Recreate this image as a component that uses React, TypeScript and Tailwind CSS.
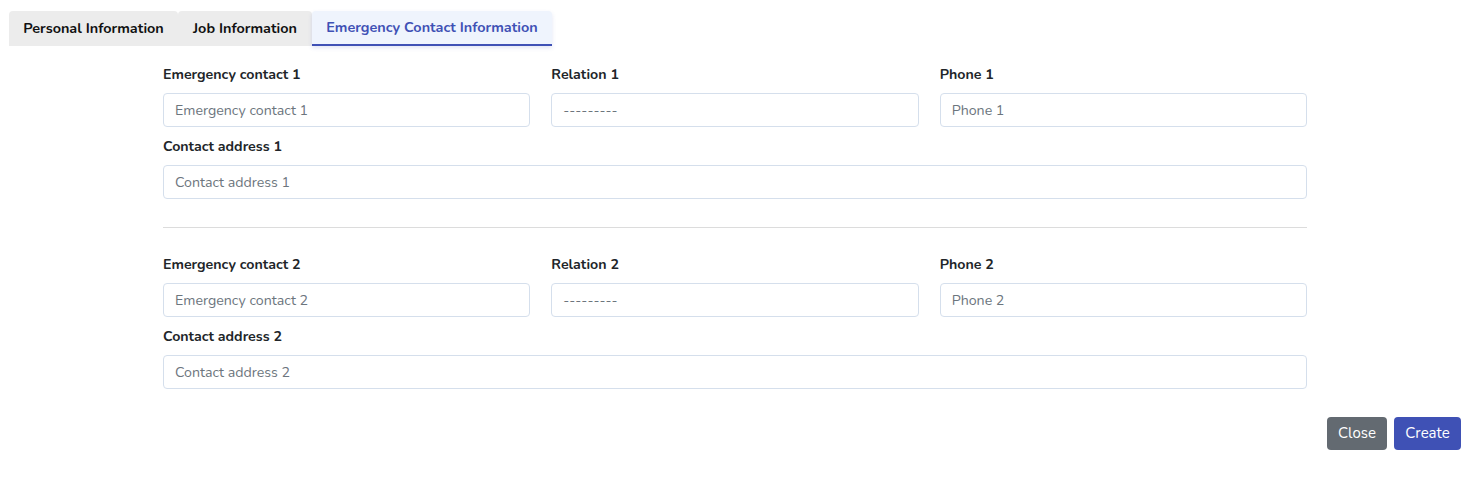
import React from "react";

const font = { fontFamily: "Nunito, Lato, 'Noto Sans', sans-serif" };

function Field({ label, placeholder }: { label: string; placeholder: string }) {
  return (
    <div className="flex flex-col">
      <label className="h-[21px] mb-2 text-[14.2px] leading-[21px] font-bold text-[#212529]">{label}</label>
      <input
        className="h-[34px] w-full rounded-[4px] border border-[#d5dfec] px-[11px] text-[14.2px] text-[#212529] placeholder:text-[#6c757d] outline-none"
        placeholder={placeholder}
      />
    </div>
  );
}

function Section({ n }: { n: number }) {
  return (
    <div className="flex flex-col gap-[9px]">
      <div className="grid grid-cols-3 gap-x-[21px]">
        <Field label={`Emergency contact ${n}`} placeholder={`Emergency contact ${n}`} />
        <Field label={`Relation ${n}`} placeholder="---------" />
        <Field label={`Phone ${n}`} placeholder={`Phone ${n}`} />
      </div>
      <Field label={`Contact address ${n}`} placeholder={`Contact address ${n}`} />
    </div>
  );
}

export default function App() {
  return (
    <div className="w-[1478px] h-[480px] bg-white pt-[11px] px-[9px]" style={font}>
      <div className="flex">
        <div className="h-[35px] w-[169px] flex items-center justify-center rounded-t-[4px] bg-[#ececec] text-[#111] text-[14.4px] font-bold">
          Personal Information
        </div>
        <div className="h-[35px] w-[134px] flex items-center justify-center rounded-t-[4px] bg-[#ececec] text-[#111] text-[14.4px] font-bold">
          Job Information
        </div>
        <div className="h-[35px] w-[240px] flex items-center justify-center rounded-t-[4px] bg-[#eff4fd] text-[#3f51b5] text-[14.4px] font-bold border-b-2 border-[#3f51b5] shadow-[0_2px_4px_rgba(63,81,181,0.15)]">
          Emergency Contact Information
        </div>
      </div>
      <div className="ml-[154px] w-[1144px] mt-[18px]">
        <Section n={1} />
        <div className="h-px bg-[#dcdcdc] mt-[28px] mb-[26px]" />
        <Section n={2} />
      </div>
      <div className="flex justify-end gap-[7px] mt-[28px] pr-[8px]">
        <button className="h-[33px] w-[60px] flex items-center justify-center rounded-[4px] bg-[#636a71] text-white text-[15px]">Close</button>
        <button className="h-[33px] w-[67px] flex items-center justify-center rounded-[4px] bg-[#3f51b5] text-white text-[15px]">Create</button>
      </div>
    </div>
  );
}
